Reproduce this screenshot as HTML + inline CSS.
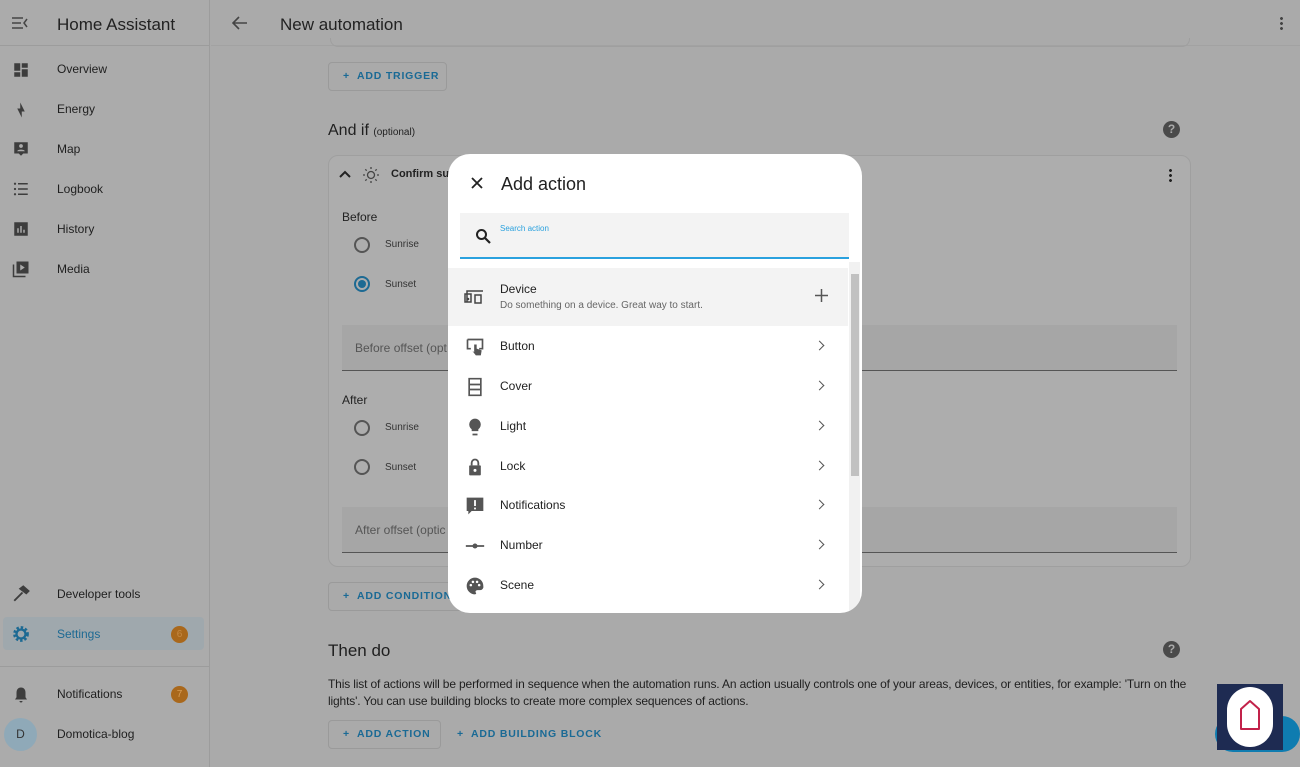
<!DOCTYPE html>
<html><head><meta charset="utf-8"><style>
*{box-sizing:border-box;margin:0;padding:0}
body{width:1300px;height:767px;overflow:hidden;background:#aaa;font-family:"Liberation Sans",sans-serif;position:relative;color:#1c1c1c}
.abs{position:absolute}
.side{left:0;top:0;width:210px;height:767px;background:#ababab;border-right:1px solid #9c9c9c}
.nav{position:absolute;left:57px;font-size:12px;color:#1f1f1f}
.ic{position:absolute;left:12px;width:18px;height:18px}
.btn{position:absolute;border:1px solid #9a9a9a;border-radius:4px;color:#1a6a95;font-size:10.5px;font-weight:bold;letter-spacing:0.8px;height:29px;line-height:27px;padding-left:14px;white-space:nowrap}
.card{left:328px;top:155px;width:863px;height:412px;border:1px solid #9f9f9f;border-radius:10px;background:#adadad}
.field{position:absolute;background:#a6a6a6;border-bottom:1px solid #555;color:#555;font-size:12px;padding-left:13px}
.radio{position:absolute;width:16px;height:16px;border:2px solid #555;border-radius:50%}
.dlg{left:448px;top:154px;width:414px;height:459px;background:#fff;border-radius:22px;overflow:hidden}
.item{position:absolute;left:0;width:400px;height:40px;font-size:12px;color:#222}
.item .t{position:absolute;left:52px;top:13px}
.item .ch{position:absolute;left:368px;top:16px;width:7px;height:7px;border-right:1.6px solid #555;border-top:1.6px solid #555;transform:rotate(45deg)}
.item svg{position:absolute;left:17px;top:11px}
</style></head><body>
<div class="abs side">
 <div class="abs" style="left:0;top:45px;width:210px;height:1px;background:#9c9c9c"></div>
 <svg class="abs" style="left:12px;top:16px" width="16" height="14"><path d="M0 2h11M0 7h9M0 12h11M15 3l-3 4 3 4" stroke="#444" stroke-width="1.5" fill="none"/></svg>
 <div class="abs" style="left:57px;top:15px;font-size:17px;color:#222">Home Assistant</div>
 <svg class="ic" style="top:61px" viewBox="0 0 24 24"><path d="M3 3h8v10H3zM13 3h8v6h-8zM13 11h8v10h-8zM3 15h8v6H3z" fill="#3d3d3d"/></svg><div class="nav" style="top:62px">Overview</div>
 <svg class="ic" style="top:101px" viewBox="0 0 24 24"><path d="M11 2v8H7l6 12v-8h4z" fill="#3d3d3d"/></svg><div class="nav" style="top:102px">Energy</div>
 <svg class="ic" style="top:140px" viewBox="0 0 24 24"><path d="M3 3h18v15h-6l-3 3-3-3H3z" fill="#3d3d3d"/><circle cx="12" cy="8" r="2.5" fill="#ababab"/><path d="M7 15c0-3 10-3 10 0z" fill="#ababab"/></svg><div class="nav" style="top:142px">Map</div>
 <svg class="ic" style="top:180px" viewBox="0 0 24 24"><path d="M8 5h13M8 12h13M8 19h13" stroke="#3d3d3d" stroke-width="2"/><circle cx="4" cy="5" r="1.5" fill="#3d3d3d"/><circle cx="4" cy="12" r="1.5" fill="#3d3d3d"/><circle cx="4" cy="19" r="1.5" fill="#3d3d3d"/></svg><div class="nav" style="top:182px">Logbook</div>
 <svg class="ic" style="top:220px" viewBox="0 0 24 24"><path d="M3 3h18v18H3z" fill="#3d3d3d"/><path d="M8 11v6M12 8v9M16 13v4" stroke="#ababab" stroke-width="2"/></svg><div class="nav" style="top:222px">History</div>
 <svg class="ic" style="top:260px" viewBox="0 0 24 24"><path d="M6 2h16v16H6z" fill="#3d3d3d"/><path d="M2 6v16h16" stroke="#3d3d3d" stroke-width="2" fill="none"/><path d="M11 6l6 4-6 4z" fill="#ababab"/></svg><div class="nav" style="top:262px">Media</div>
 <svg class="ic" style="top:585px" viewBox="0 0 24 24"><path d="M3 21L14 10M11 5l4-3 7 6-3 3z" stroke="#3d3d3d" stroke-width="2.5" fill="#3d3d3d"/></svg><div class="nav" style="top:587px">Developer tools</div>
 <div class="abs" style="left:3px;top:617px;width:201px;height:33px;background:#9fa8ad;border-radius:4px"></div>
 <svg class="ic" style="top:625px" viewBox="0 0 24 24"><circle cx="12" cy="12" r="8" fill="none" stroke="#1d6a93" stroke-width="5" stroke-dasharray="3 2.3"/><circle cx="12" cy="12" r="6" fill="none" stroke="#1d6a93" stroke-width="3"/></svg><div class="nav" style="top:627px;color:#1d6a93">Settings</div>
 <div class="abs" style="left:171px;top:626px;width:17px;height:17px;border-radius:50%;background:#a9681c;color:#c58a45;font-size:10px;text-align:center;line-height:17px">6</div>
 <div class="abs" style="left:0;top:666px;width:210px;height:1px;background:#9c9c9c"></div>
 <svg class="ic" style="top:686px" viewBox="0 0 24 24"><path d="M12 2c-4 0-6 3-6 7v6l-2 3h16l-2-3V9c0-4-2-7-6-7zM10 20h4a2 2 0 0 1-4 0z" fill="#3d3d3d"/></svg><div class="nav" style="top:687px">Notifications</div>
 <div class="abs" style="left:171px;top:686px;width:17px;height:17px;border-radius:50%;background:#a9681c;color:#d69c55;font-size:10px;text-align:center;line-height:17px">7</div>
 <div class="abs" style="left:4px;top:718px;width:33px;height:33px;border-radius:50%;background:#8fa9b8;color:#333;font-size:12px;text-align:center;line-height:33px">D</div>
 <div class="nav" style="top:727px">Domotica-blog</div>
</div>
<svg class="abs" style="left:232px;top:16px" width="16" height="14"><path d="M15 7H2M7 1L1 7l6 6" stroke="#444" stroke-width="1.6" fill="none"/></svg>
<div class="abs" style="left:280px;top:15px;font-size:17px;color:#222">New automation</div>
<div class="abs" style="left:1280px;top:16px;width:3px;height:14px;background:radial-gradient(circle,#444 1.3px,transparent 1.6px) 0 0/3px 5px"></div>
<div class="abs" style="left:211px;top:45px;width:1089px;height:1px;background:#a2a2a2"></div>
<div class="abs" style="left:330px;top:38px;width:860px;height:9px;border:1px solid #9f9f9f;border-top:none;border-radius:0 0 8px 8px"></div>
<div class="btn" style="left:328px;top:62px;width:119px">+&nbsp; ADD TRIGGER</div>
<div class="abs" style="left:328px;top:122px;font-size:16px;color:#1f1f1f">And if <span style="font-size:10px">(optional)</span></div>
<div class="abs" style="left:1163px;top:121px;width:17px;height:17px;border-radius:50%;background:#4a4a4a;color:#aaa;font-size:12px;font-weight:bold;text-align:center;line-height:17px">?</div>
<div class="abs card">
 <svg class="abs" style="left:10px;top:14px" width="12" height="10"><path d="M1 7l5-5 5 5" stroke="#222" stroke-width="2" fill="none"/></svg>
 <svg class="abs" style="left:34px;top:11px" width="16" height="16"><circle cx="8" cy="8" r="3.5" stroke="#444" fill="none" stroke-width="1.3"/><path d="M8 0v2M8 14v2M0 8h2M14 8h2M2.3 2.3l1.4 1.4M12.3 12.3l1.4 1.4M2.3 13.7l1.4-1.4M12.3 3.7l1.4-1.4" stroke="#444" stroke-width="1.3"/></svg>
 <div class="abs" style="left:62px;top:12px;font-size:11px;font-weight:bold;color:#222">Confirm su</div>
 <div class="abs" style="left:840px;top:12px;width:3px;height:14px;background:radial-gradient(circle,#222 1.3px,transparent 1.6px) 0 0/3px 5px"></div>
 <div class="abs" style="left:13px;top:54px;font-size:12px;color:#222">Before</div>
 <div class="radio" style="left:25px;top:81px"></div><div class="abs" style="left:56px;top:83px;font-size:10px;color:#333">Sunrise</div>
 <div class="radio" style="left:25px;top:120px;border-color:#1d6a93"><div style="margin:2px;width:8px;height:8px;border-radius:50%;background:#1d6a93"></div></div><div class="abs" style="left:56px;top:123px;font-size:10px;color:#333">Sunset</div>
 <div class="field" style="left:13px;top:169px;width:835px;height:46px;line-height:46px">Before offset (opt</div>
 <div class="abs" style="left:13px;top:237px;font-size:12px;color:#222">After</div>
 <div class="radio" style="left:25px;top:264px"></div><div class="abs" style="left:56px;top:266px;font-size:10px;color:#333">Sunrise</div>
 <div class="radio" style="left:25px;top:303px"></div><div class="abs" style="left:56px;top:306px;font-size:10px;color:#333">Sunset</div>
 <div class="field" style="left:13px;top:351px;width:835px;height:46px;line-height:46px">After offset (optic</div>
</div>
<div class="btn" style="left:328px;top:582px;width:140px">+&nbsp; ADD CONDITION</div>
<div class="abs" style="left:328px;top:641px;font-size:17px;color:#1f1f1f">Then do</div>
<div class="abs" style="left:1163px;top:641px;width:17px;height:17px;border-radius:50%;background:#4a4a4a;color:#aaa;font-size:12px;font-weight:bold;text-align:center;line-height:17px">?</div>
<div class="abs" style="left:328px;top:676px;width:862px;font-size:12px;letter-spacing:-0.15px;line-height:17px;color:#1f1f1f">This list of actions will be performed in sequence when the automation runs. An action usually controls one of your areas, devices, or entities, for example: 'Turn on the lights'. You can use building blocks to create more complex sequences of actions.</div>
<div class="btn" style="left:328px;top:720px;width:113px">+&nbsp; ADD ACTION</div>
<div class="abs" style="left:457px;top:728px;font-size:10.5px;font-weight:bold;letter-spacing:0.8px;color:#1a6a95">+&nbsp; ADD BUILDING BLOCK</div>
<div class="abs" style="left:1215px;top:716px;width:85px;height:36px;border-radius:18px;background:#0f7cb0"></div>
<div class="abs" style="left:1217px;top:684px;width:66px;height:66px;background:#1e2b52"></div>
<div class="abs" style="left:1227px;top:687px;width:46px;height:60px;border-radius:23px;background:#fff"></div>
<svg class="abs" style="left:1238px;top:698px" width="24" height="34"><path d="M3 31V11l9-8 9 8v20z" stroke="#c2224a" stroke-width="2" fill="none" stroke-linejoin="round"/></svg>
<div class="abs dlg">
 <svg class="abs" style="left:23px;top:23px" width="12" height="12"><path d="M1 1l10 10M11 1L1 11" stroke="#222" stroke-width="1.8"/></svg>
 <div class="abs" style="left:53px;top:20px;font-size:18px;color:#222">Add action</div>
 <div class="abs" style="left:12px;top:59px;width:389px;height:46px;background:#f3f3f3;border-bottom:2px solid #2aa1de"></div>
 <svg class="abs" style="left:27px;top:74px" width="16" height="16"><circle cx="6.5" cy="6.5" r="4.5" stroke="#222" stroke-width="2" fill="none"/><path d="M10 10l5 5" stroke="#222" stroke-width="2.2"/></svg>
 <div class="abs" style="left:52px;top:70px;font-size:8px;color:#2aa1de">Search action</div>
 <div class="abs" style="left:0;top:114px;width:400px;height:58px;background:#f3f3f3"></div>
 <svg class="abs" style="left:16px;top:135px" width="20" height="16"><path d="M3 13V2h16M1 5h6v8H1zM11 6h6v8h-6z" stroke="#444" stroke-width="1.5" fill="none"/><circle cx="4" cy="10" r="1.3" fill="#444"/></svg>
 <div class="abs" style="left:52px;top:128px;font-size:12px;color:#222">Device</div>
 <div class="abs" style="left:52px;top:146px;font-size:10px;color:#666">Do something on a device. Great way to start.</div>
 <svg class="abs" style="left:367px;top:135px" width="13" height="13"><path d="M6.5 0v13M0 6.5h13" stroke="#555" stroke-width="1.5"/></svg>
 <div class="item" style="top:172px"><svg width="20" height="20" viewBox="0 0 24 24"><path d="M3 3h18v11h-4M7 14H3V3" stroke="#555" stroke-width="2" fill="none"/><path d="M11 9v9l-2-1 4 5h6l1-6-6-2v-5z" fill="#555"/></svg><div class="t">Button</div><div class="ch"></div></div>
 <div class="item" style="top:212px"><svg width="20" height="20" viewBox="0 0 24 24"><path d="M5 2h14v20H5zM5 9h14M5 15h14" stroke="#555" stroke-width="2" fill="none"/></svg><div class="t">Cover</div><div class="ch"></div></div>
 <div class="item" style="top:252px"><svg width="20" height="20" viewBox="0 0 24 24"><path d="M12 2a7 7 0 0 0-4 12.7V17h8v-2.3A7 7 0 0 0 12 2zM9 20h6v2H9z" fill="#555"/></svg><div class="t">Light</div><div class="ch"></div></div>
 <div class="item" style="top:292px"><svg width="20" height="20" viewBox="0 0 24 24"><path d="M8 10V7a4 4 0 0 1 8 0v3" stroke="#555" stroke-width="2.2" fill="none"/><rect x="5" y="10" width="14" height="12" rx="1" fill="#555"/><circle cx="12" cy="16" r="1.8" fill="#fff"/></svg><div class="t">Lock</div><div class="ch"></div></div>
 <div class="item" style="top:331px"><svg width="20" height="20" viewBox="0 0 24 24"><path d="M2 2h20v16H8l-4 4v-4H2z" fill="#555"/><path d="M12 5v7M12 14v2" stroke="#fff" stroke-width="2.2"/></svg><div class="t">Notifications</div><div class="ch"></div></div>
 <div class="item" style="top:371px"><svg width="20" height="20" viewBox="0 0 24 24"><path d="M1 12h22" stroke="#555" stroke-width="2"/><circle cx="12" cy="12" r="3" fill="#555"/></svg><div class="t">Number</div><div class="ch"></div></div>
 <div class="item" style="top:411px"><svg width="20" height="20" viewBox="0 0 24 24"><path d="M12 2a10 10 0 0 0 0 20c1 0 2-1 1-2s0-3 2-3h3a4 4 0 0 0 4-5C22 6 17 2 12 2z" fill="#555"/><circle cx="7" cy="11" r="1.5" fill="#fff"/><circle cx="9.5" cy="7" r="1.5" fill="#fff"/><circle cx="14.5" cy="7" r="1.5" fill="#fff"/><circle cx="17" cy="11" r="1.5" fill="#fff"/></svg><div class="t">Scene</div><div class="ch"></div></div>
 <div class="abs" style="left:401px;top:108px;width:11px;height:350px;background:#f1f1f1"></div>
 <div class="abs" style="left:403px;top:120px;width:8px;height:202px;background:#c1c1c1"></div>
</div>
</body></html>
